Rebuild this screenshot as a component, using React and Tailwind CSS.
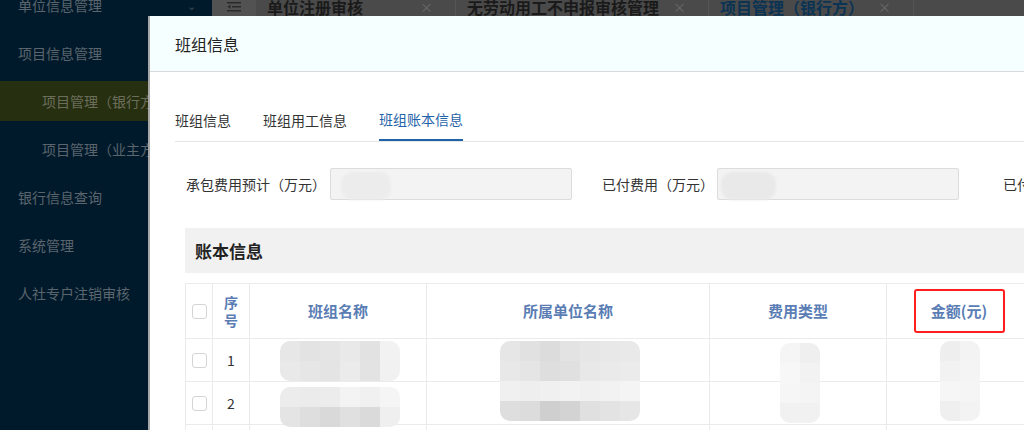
import React from 'react'

const FONT = { fontFamily: '"Noto Sans CJK SC", "Liberation Sans", sans-serif' }

// 侧边菜单
const menu = [
  { label: '单位信息管理', chevron: true },
  { label: '项目信息管理' },
  { label: '项目管理（银行方）', sub: true, active: true },
  { label: '项目管理（业主方）', sub: true },
  { label: '银行信息查询' },
  { label: '系统管理' },
  { label: '人社专户注销审核' },
]

const topTabs = [
  { label: '单位注册审核', w: 'w-[200px]' },
  { label: '无劳动用工不申报审核管理', w: 'w-[253px]' },
  { label: '项目管理（银行方）', w: 'w-[205px]', active: true },
]

// 马赛克块
function Mosaic({ rows, className }) {
  return (
    <div className={`absolute flex flex-col overflow-hidden rounded-[10px] blur-[0.5px] ${className}`}>
      {rows.map((r, i) => (
        <div key={i} className="flex">
          {r.map((c, j) => (
            <div key={j} className="w-5 h-5" style={{ background: c }} />
          ))}
        </div>
      ))}
    </div>
  )
}

function Checkbox() {
  return <span className="block w-[15px] h-[15px] rounded-[3px] border border-[#d4d4d4] bg-white" />
}

const cell = 'border-r border-b border-[#ebebeb] flex items-center justify-center'

export default function App() {
  return (
    <div className="relative w-[1024px] h-[430px] overflow-hidden bg-[#3a3a3a]" style={FONT}>
      <div className="flex h-full">
        {/* 侧边栏 */}
        <div className="w-[212px] shrink-0 bg-[#011a2b] text-[14px] text-[#5b656d]">
          <div className="-mt-[19px]">
            {menu.map((m) => (
              <div key={m.label} className="h-12 flex items-center">
                <div
                  className={`w-full flex items-center ${m.active ? 'h-10 bg-[#262f10] text-[#6c6e5c]' : 'h-12'} ${m.sub ? 'pl-[42px]' : 'pl-[18px]'}`}
                >
                  <span className="whitespace-nowrap">{m.label}</span>
                  {m.chevron && <span className="ml-auto mr-[16px] text-[11px] text-[#3c4a55]">⌄</span>}
                </div>
              </div>
            ))}
          </div>
        </div>

        {/* 主区域 */}
        <div className="flex-1 flex flex-col">
          <div className="h-4 flex bg-[#4a4a4a] overflow-hidden">
            <div className="w-[44px] flex items-start justify-center bg-[#525252]">
              <svg width="14" height="12" viewBox="0 0 14 12" className="mt-[1px]">
                <rect x="0" y="1" width="14" height="1.5" fill="#2a2a2a" />
                <rect x="5" y="5" width="9" height="1.5" fill="#2a2a2a" />
                <rect x="0" y="9" width="14" height="1.5" fill="#2a2a2a" />
                <path d="M3.5 3.5 L0.5 5.75 L3.5 8" fill="#2a2a2a" />
              </svg>
            </div>
            {topTabs.map((t) => (
              <div key={t.label} className={`${t.w} flex items-start pl-[11px] border-r border-[#555]`}>
                <span className={`text-[16px] leading-[14px] font-semibold whitespace-nowrap ${t.active ? 'text-[#0b3353]' : 'text-[#1a1a1a]'}`}>
                  {t.label}
                </span>
                <span className="ml-auto mr-[22px] text-[13px] leading-[14px] text-[#6a6a6a]">×</span>
              </div>
            ))}
          </div>
          <div className="flex-1 bg-[#3a3a3a]" />
        </div>
      </div>

      {/* 弹窗 */}
      <div className="absolute left-[148px] top-4 right-0 bottom-0 bg-white border-l-2 border-[#a8a8a8] overflow-hidden">
        <div className="h-14 bg-[#f6ffff] border-b border-[#d9d9d9] flex items-center pl-[25px] text-[16px] text-[#222]">
          班组信息
        </div>

        <div className="pl-[25px] pt-[27px] w-[1100px]">
          {/* 标签页 */}
          <div className="flex gap-8 border-b border-[#e6e6e6] text-[14px] text-[#333]">
            <div className="h-[42px] flex items-center">班组信息</div>
            <div className="h-[42px] flex items-center">班组用工信息</div>
            <div className="h-[42px] flex items-center text-[#1f63a8] border-b-2 border-[#1f63a8] -mb-px">班组账本信息</div>
          </div>

          {/* 表单行 */}
          <div className="flex items-center mt-[26px] text-[14px] text-[#333] pl-[11px]">
            <span className="whitespace-nowrap">承包费用预计（万元）</span>
            <div className="relative ml-[4px] w-[242px] h-8 bg-[#f3f3f3] border border-[#dcdcdc] rounded-[2px]">
              <div className="absolute left-[10px] top-[3px] w-[50px] h-[28px] rounded-[12px] bg-[#ececec] blur-[1px]" />
            </div>
            <span className="ml-[30px] whitespace-nowrap">已付费用（万元）</span>
            <div className="relative ml-[3px] w-[242px] h-8 bg-[#f3f3f3] border border-[#dcdcdc] rounded-[2px]">
              <div className="absolute left-[3px] top-[3px] w-[55px] h-[28px] rounded-[12px] bg-[#e9e9e9] blur-[1px]" />
            </div>
            <span className="ml-[44px] whitespace-nowrap">已付费用</span>
          </div>

          {/* 账本信息 */}
          <div className="ml-[10px] mt-[28px] h-[45px] bg-[#f1f1f1] flex items-center pl-[10px] text-[17px] font-bold text-[#222]">
            账本信息
          </div>

          <div className="relative ml-[10px] mt-[10px]">
            <div className="grid grid-cols-[27px_37px_177px_283px_177px_145px_1fr] border-l border-t border-[#ebebeb] text-[15px]">
              <div className={`${cell} h-[55px]`}><Checkbox /></div>
              <div className={`${cell} flex-col text-[14px] leading-[18px] font-bold text-[#5a7db4]`}>
                <span>序</span>
                <span>号</span>
              </div>
              <div className={`${cell} font-bold text-[#5a7db4]`}>班组名称</div>
              <div className={`${cell} font-bold text-[#5a7db4]`}>所属单位名称</div>
              <div className={`${cell} font-bold text-[#5a7db4]`}>费用类型</div>
              <div className={`${cell}`}>
                <div className="w-[91px] h-[44px] border-2 border-[#ff1f1f] rounded-[3px] flex items-center justify-center font-bold text-[#5a7db4]">
                  金额(元)
                </div>
              </div>
              <div className={cell} />

              {[1, 2, 3].map((n) => (
                <React.Fragment key={n}>
                  <div className={`${cell} h-[43px]`}><Checkbox /></div>
                  <div className={`${cell} text-[14px] text-[#333]`}>{n}</div>
                  <div className={cell} />
                  <div className={cell} />
                  <div className={cell} />
                  <div className={cell} />
                  <div className={cell} />
                </React.Fragment>
              ))}
            </div>

            {/* 打码 */}
            <Mosaic
              className="left-[95px] top-[58px]"
              rows={[
                ['#e7e7e7', '#e3e3e3', '#e5e5e5', '#e9e9e9', '#e2e2e2', '#f2f2f2'],
                ['#e9e9e9', '#e6e6e6', '#e4e4e4', '#ebebeb', '#e3e3e3', '#f1f1f1'],
              ]}
            />
            <Mosaic
              className="left-[95px] top-[104px]"
              rows={[
                ['#ececec', '#ebebeb', '#ececec', '#f3f3f3', '#f0f0f0', '#f5f5f5'],
                ['#e4e4e4', '#dedede', '#d9d9d9', '#e0e0e0', '#dadada', '#efefef'],
              ]}
            />
            <Mosaic
              className="left-[315px] top-[58px]"
              rows={[
                ['#e6e6e6', '#e1e1e1', '#dcdcdc', '#e3e3e3', '#e6e6e6', '#e8e8e8', '#e9e9e9'],
                ['#e8e8e8', '#e5e5e5', '#dedede', '#e0e0e0', '#e8e8e8', '#eaeaea', '#ebebeb'],
                ['#f0f0f0', '#eeeeee', '#f0f0f0', '#f2f2f2', '#f0f0f0', '#f2f2f2', '#f4f4f4'],
                ['#dedede', '#dcdcdc', '#cfcfcf', '#d3d3d3', '#e0e0e0', '#e3e3e3', '#e6e6e6'],
              ]}
            />
            <Mosaic
              className="left-[595px] top-[60px]"
              rows={[
                ['#f5f5f5', '#efefef'],
                ['#f7f7f7', '#f2f2f2'],
                ['#f6f6f6', '#f4f4f4'],
                ['#f1f1f1', '#f1f1f1'],
              ]}
            />
            <Mosaic
              className="left-[755px] top-[58px]"
              rows={[
                ['#eeeeee', '#f3f3f3'],
                ['#f2f2f2', '#f4f4f4'],
                ['#f6f6f6', '#f5f5f5'],
                ['#efefef', '#f3f3f3'],
              ]}
            />
          </div>
        </div>
      </div>
    </div>
  )
}
